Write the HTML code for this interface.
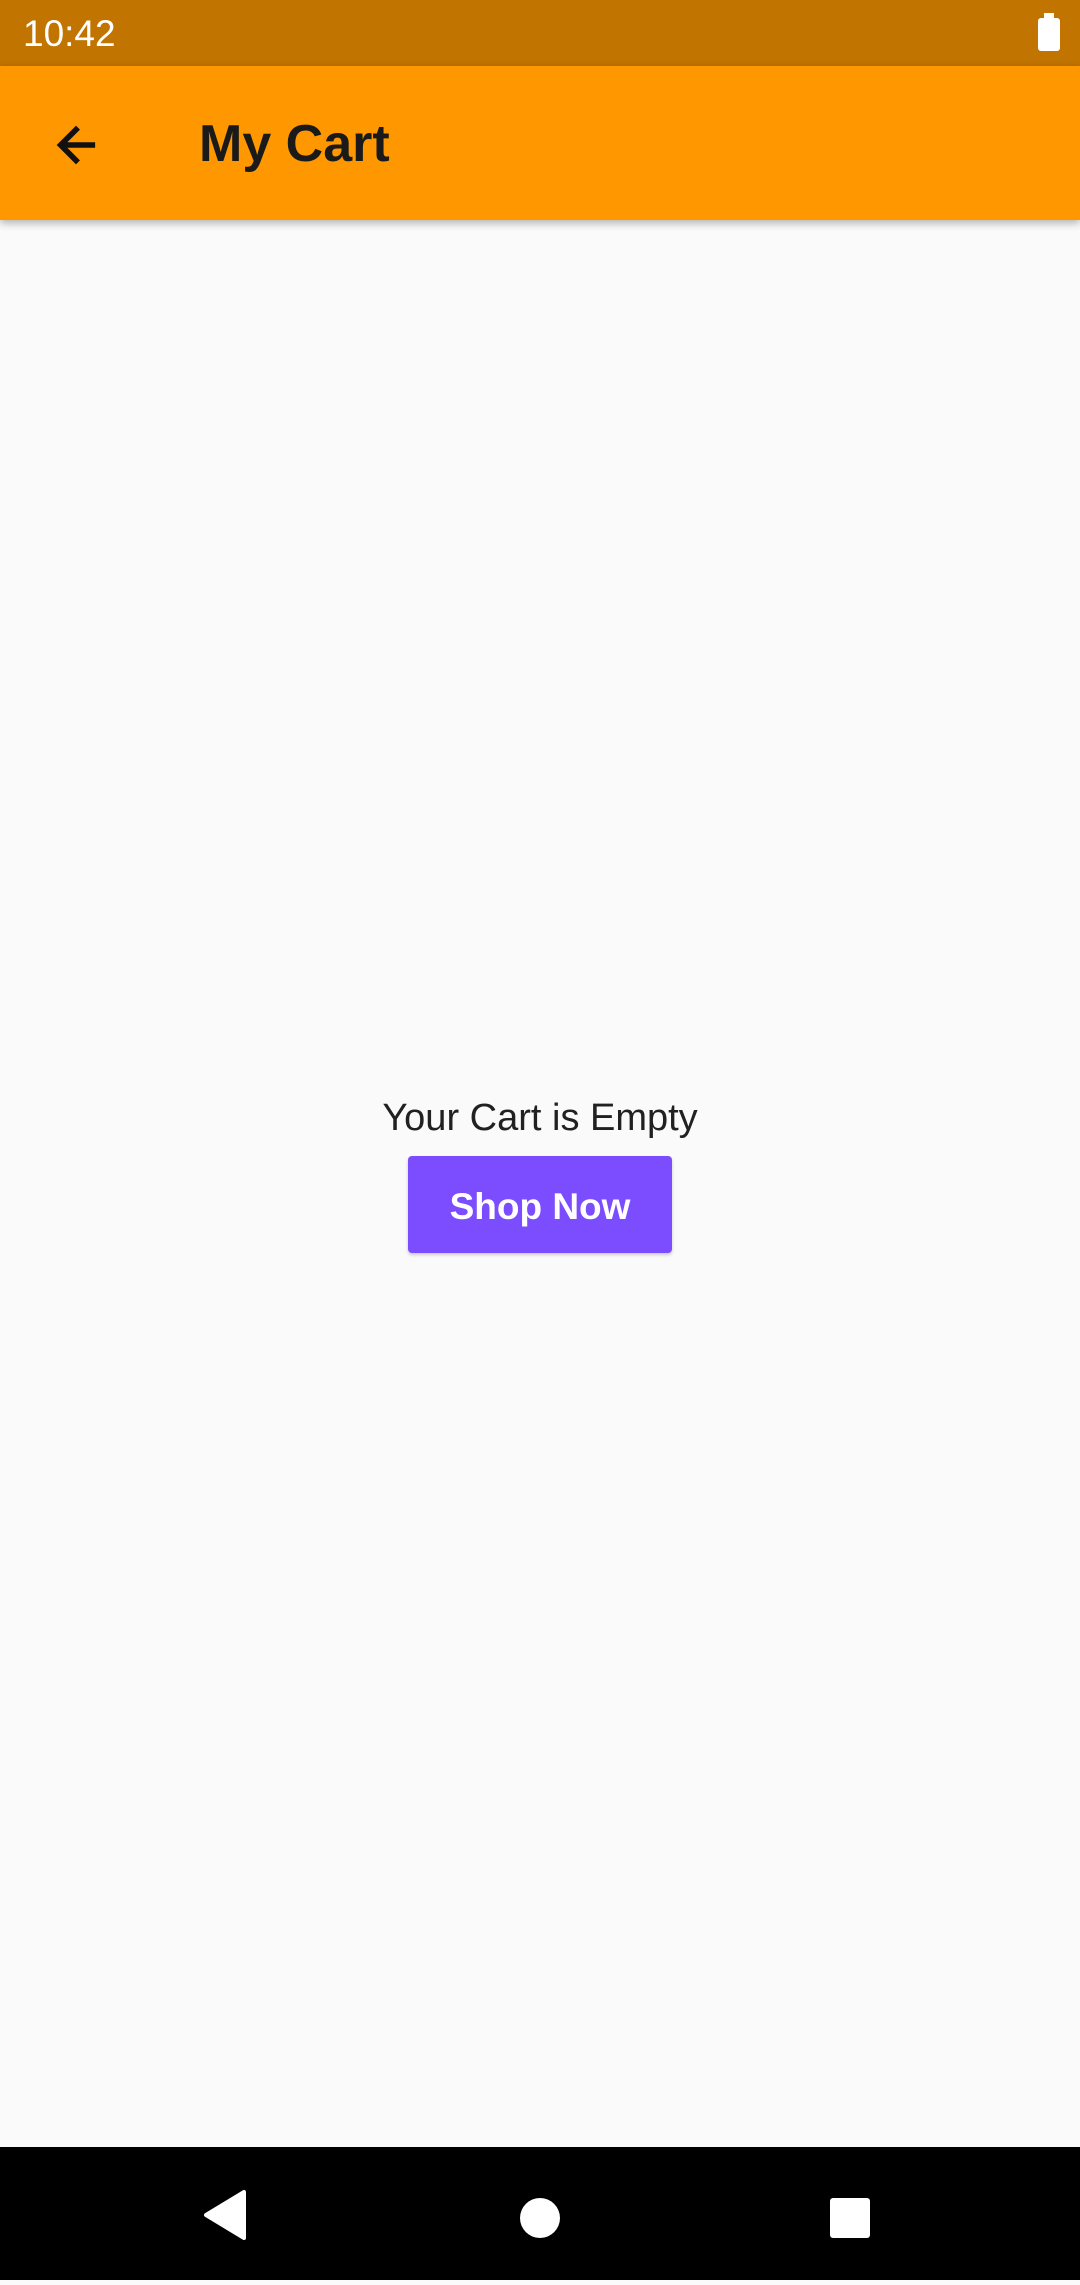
<!DOCTYPE html>
<html><head><meta charset="utf-8"><style>
*{margin:0;padding:0;box-sizing:border-box}
body{width:1080px;height:2280px;background:#fafafa;font-family:"Liberation Sans",sans-serif;position:relative;overflow:hidden}
.sb{position:absolute;top:0;left:0;width:1080px;height:66px;background:#c17400}
.time{position:absolute;left:23px;top:13px;color:#fff;font-size:37px}
.bat{position:absolute;left:1038px;top:18px;width:22px;height:33px;background:#fff;border-radius:3px}
.bat:before{content:"";position:absolute;left:6px;top:-5px;width:10px;height:5px;background:#fff}
.ab{position:absolute;top:66px;left:0;width:1080px;height:154px;background:#ff9800;box-shadow:0 3px 8px rgba(0,0,0,.3)}
.title{position:absolute;left:199px;top:48px;font-size:52px;color:#1a1a1a;font-weight:bold}
.back{position:absolute;left:48px;top:51px}
.msg{position:absolute;top:1097px;left:0;width:1080px;text-align:center;font-size:38px;color:#212121}
.btn{position:absolute;left:408px;top:1156px;width:264px;height:97px;background:#7c4dff;border-radius:4px;color:#fff;font-size:37px;font-weight:bold;text-align:center;line-height:101px;box-shadow:0 2px 3px rgba(0,0,0,.2)}
.nav{position:absolute;top:2147px;left:0;width:1080px;height:133px;background:#000}
</style></head><body>
<div class="sb"><div class="time">10:42</div><div class="bat"></div></div>
<div class="ab">
<svg class="back" width="56" height="56" viewBox="0 0 24 24"><path d="M20 11H7.83l5.59-5.59L12 4l-8 8 8 8 1.41-1.41L7.83 13H20v-2z" fill="#111" stroke="#111" stroke-width="0.4"/></svg>
<div class="title">My Cart</div></div>
<div class="msg">Your Cart is Empty</div>
<div class="btn">Shop Now</div>
<div class="nav">
<svg width="1080" height="133"><polygon points="244,45 244,91 206,68" fill="#fff" stroke="#fff" stroke-width="4" stroke-linejoin="round"/>
<circle cx="540" cy="71" r="20" fill="#fff"/>
<rect x="830" y="51" width="40" height="40" rx="3" fill="#fff"/></svg>
</div>
</body></html>
